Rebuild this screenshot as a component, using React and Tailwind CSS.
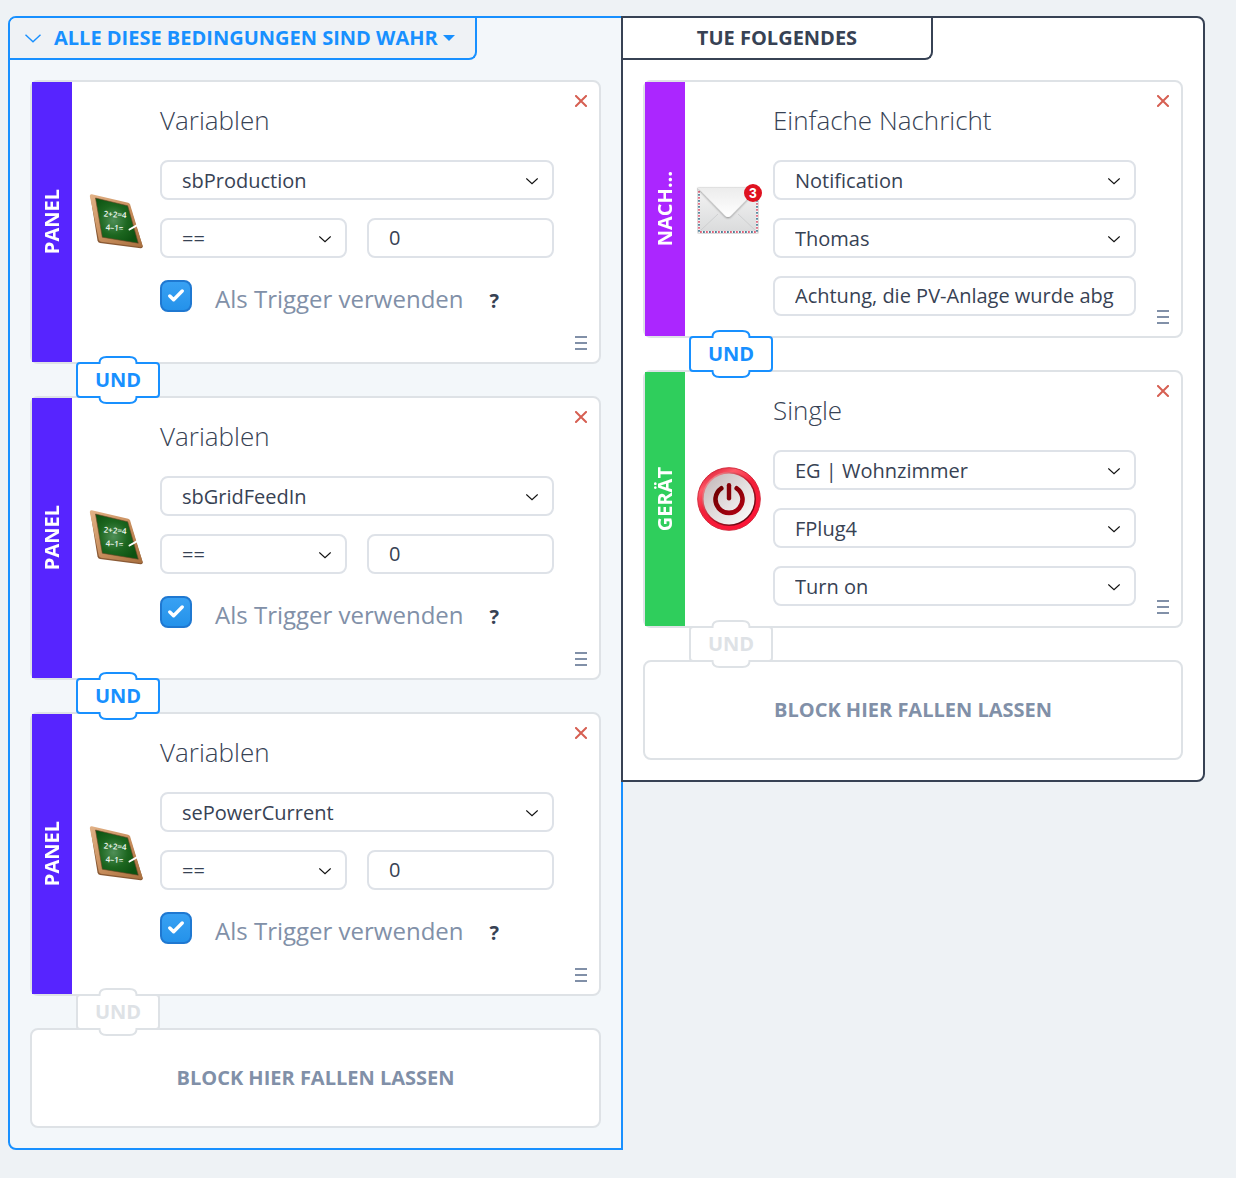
import { useId } from "react";

function ChalkboardIcon() {
  const id = useId();
  return (
    <svg viewBox="0 0 64 64" className="size-16" aria-hidden="true">
      <defs>
        <linearGradient id={id + "wood"} x1="0" y1="0" x2="1" y2="1">
          <stop offset="0" stopColor="#e2b287" />
          <stop offset="0.5" stopColor="#c98f5e" />
          <stop offset="1" stopColor="#a9703f" />
        </linearGradient>
        <radialGradient id={id + "slate"} cx="0.42" cy="0.5" r="0.6">
          <stop offset="0" stopColor="#4f8f57" />
          <stop offset="0.55" stopColor="#1c661f" />
          <stop offset="1" stopColor="#0d5211" />
        </radialGradient>
      </defs>
      <path d="M6.5 6.5 L45.5 15 L58.8 56.6 Q58.6 58.4 56.6 58.2 L16 53 Q14 52.5 13.5 50.5Z" fill="#8a5a35" />
      <path d="M5.8 6 Q5.8 4 7.8 4.3 L44.2 12.8 Q45.7 13.3 46.1 14.6 L58.4 55.3 Q58.6 57.2 56.6 57 L17 51.7 Q15.2 51.3 14.8 49.8Z" fill={`url(#${id}wood)`} />
      <path d="M11.5 8 L43.7 15.8 L54.3 53.2 L18.3 47.2Z" fill={`url(#${id}slate)`} stroke="#6b4525" strokeWidth="0.6" />
      <g fill="#f4fbf4" fontFamily="Open Sans, sans-serif" fontWeight="600" fontSize="8">
        <text x="19.5" y="26.5" transform="rotate(4 19.5 26.5)">2+2=4</text>
        <text x="21.5" y="40" transform="rotate(4 21.5 40)">4–1=</text>
      </g>
      <path d="M45.5 39.5 L52.8 35.3" stroke="#fff" strokeWidth="2" strokeLinecap="round" />
    </svg>
  );
}

function MailIcon() {
  const id = useId();
  return (
    <svg viewBox="0 0 64 64" className="size-16 overflow-visible" aria-hidden="true">
      <defs>
        <linearGradient id={id + "paper"} x1="0" y1="0" x2="0" y2="1">
          <stop offset="0" stopColor="#f4f4f4" />
          <stop offset="1" stopColor="#d9dadb" />
        </linearGradient>
        <linearGradient id={id + "flap"} x1="0" y1="0" x2="0" y2="1">
          <stop offset="0" stopColor="#ececec" />
          <stop offset="1" stopColor="#ffffff" />
        </linearGradient>
        <filter id={id + "shade"} x="-10%" y="-10%" width="120%" height="130%">
          <feDropShadow dx="0" dy="1" stdDeviation="0.8" floodColor="#000" floodOpacity="0.4" />
        </filter>
      </defs>
      <rect x="0.5" y="10.5" width="61" height="46" rx="1" fill={`url(#${id}paper)`} stroke="#dcdcdc" />
      <g fill="none" strokeWidth="1.8">
        <path d="M2 13 V55 M60 13 V55 M2 55 H60" stroke="#f6f6f6" />
        <path d="M2 14 V55 M60 14 V55 M3 55 H60" stroke="#e0637b" strokeDasharray="1.8 4.2" />
        <path d="M2 17 V55 M60 17 V55 M6 55 H60" stroke="#4d8199" strokeDasharray="1.8 4.2" />
      </g>
      <path d="M4 53 L21 37 M58 53 L41 37" stroke="#c9cacb" strokeWidth="0.8" />
      <path d="M0.5 10.5 H61.5 L34 38.5 Q31 41.5 28 38.5Z" fill={`url(#${id}flap)`} filter={`url(#${id}shade)`} />
      <circle cx="56" cy="16" r="9" fill="#df1220" />
      <text x="56" y="21" textAnchor="middle" fill="#fff" fontFamily="Liberation Sans, sans-serif" fontWeight="700" fontSize="14">3</text>
    </svg>
  );
}

function PowerIcon() {
  const id = useId();
  return (
    <svg viewBox="0 0 64 64" className="size-16" aria-hidden="true">
      <defs>
        <linearGradient id={id + "ring"} x1="0.2" y1="0" x2="0.8" y2="1">
          <stop offset="0" stopColor="#d81730" />
          <stop offset="0.2" stopColor="#ff5a68" />
          <stop offset="0.45" stopColor="#f3203a" />
          <stop offset="1" stopColor="#ff1236" />
        </linearGradient>
        <linearGradient id={id + "rim"} x1="0" y1="0" x2="1" y2="1">
          <stop offset="0" stopColor="#ffb3b3" />
          <stop offset="0.5" stopColor="#c2182b" />
          <stop offset="1" stopColor="#3d0007" />
        </linearGradient>
        <linearGradient id={id + "face"} x1="0" y1="0" x2="1" y2="1">
          <stop offset="0" stopColor="#c0b4b5" />
          <stop offset="0.5" stopColor="#e2dddd" />
          <stop offset="1" stopColor="#ffffff" />
        </linearGradient>
        <linearGradient id={id + "mark"} x1="0" y1="0" x2="1" y2="1">
          <stop offset="0" stopColor="#6d0000" />
          <stop offset="1" stopColor="#b00012" />
        </linearGradient>
      </defs>
      <circle cx="32" cy="32" r="31.3" fill={`url(#${id}ring)`} stroke="#d32a3c" />
      <circle cx="32" cy="32" r="27" fill={`url(#${id}rim)`} />
      <circle cx="32" cy="32" r="25.5" fill={`url(#${id}face)`} />
      <path d="M24.3 21.3 A13.5 13.5 0 1 0 39.7 21.3" fill="none" stroke={`url(#${id}mark)`} strokeWidth="4.6" strokeLinecap="round" />
      <rect x="29.8" y="16" width="4.4" height="17.5" rx="2.2" fill="#870008" />
    </svg>
  );
}

function Connector({ active }) {
  return (
    <div className={`relative z-10 ml-[46px] flex h-8 w-[84px] items-center ${active ? "text-[#1890ff]" : "text-[#dee2e6]"}`}>
      <div className="-my-2 grid w-full place-items-center">
        <svg width="84" height="48" viewBox="0 0 84 48" className="col-start-1 row-start-1" aria-hidden="true">
          <path
            d="M4 7 H23.5 C23.5 3 26.5 1 30.5 1 H53.5 C57.5 1 60.5 3 60.5 7 H80 Q83 7 83 10 V38 Q83 41 80 41 H60.5 C60.5 45 57.5 47 53.5 47 H30.5 C26.5 47 23.5 45 23.5 41 H4 Q1 41 1 38 V10 Q1 7 4 7Z"
            fill="#fff"
            stroke="currentColor"
            strokeWidth="2"
          />
        </svg>
        <span className="col-start-1 row-start-1 text-xl leading-7 font-bold">UND</span>
      </div>
    </div>
  );
}

function SelectField({ label, value }) {
  return (
    <div className="relative">
      <select
        aria-label={label}
        defaultValue={value}
        className="block h-10 w-full appearance-none rounded-lg border-2 border-[#dee2e8] bg-white pt-0.5 pr-10 pl-5 text-xl leading-7"
      >
        <option>{value}</option>
      </select>
      <svg viewBox="0 0 12 7" className="pointer-events-none absolute top-[18px] right-4 h-[7px] w-3" fill="none" stroke="#111" strokeWidth="1.2" aria-hidden="true">
        <path d="M0.3 0.5 L6 5.8 L11.7 0.5" />
      </svg>
    </div>
  );
}

function TextField({ label, value }) {
  return (
    <input
      type="text"
      aria-label={label}
      defaultValue={value}
      className="block h-10 w-full min-w-0 rounded-lg border-2 border-[#dee2e8] bg-white px-5 pb-0.5 text-xl leading-7"
    />
  );
}

function BlockCard({ tag, stripClass, icon, title, children }) {
  return (
    <article className="flex rounded-lg border-2 border-[#dee2e6] bg-white">
      <div className={`flex w-10 shrink-0 items-center justify-center text-white ${stripClass}`}>
        <span className="rotate-180 text-xl leading-7 font-bold [writing-mode:vertical-rl]">{tag}</span>
      </div>
      <div className="flex w-[88px] shrink-0 items-center justify-center">{icon}</div>
      <div className="min-w-0 flex-1 py-5">
        <h2 className="mb-[22px] text-[26px] leading-9 font-light">{title}</h2>
        <div className="flex flex-col gap-[18px]">{children}</div>
      </div>
      <div className="flex w-[45px] shrink-0 flex-col items-end justify-between">
        <button type="button" aria-label="Block entfernen" className="flex h-[38px] w-9 items-center justify-center">
          <svg viewBox="0 0 12 12" className="size-3" stroke="#d65f52" strokeWidth="2" aria-hidden="true">
            <path d="M0.3 0.3 L11.7 11.7 M11.7 0.3 L0.3 11.7" />
          </svg>
        </button>
        <button type="button" aria-label="Block verschieben" className="flex h-[38px] w-9 items-center justify-center">
          <svg viewBox="0 0 12 14" className="h-3.5 w-3" stroke="#8190a8" strokeWidth="2" aria-hidden="true">
            <path d="M0 1 H12 M0 7 H12 M0 13 H12" />
          </svg>
        </button>
      </div>
    </article>
  );
}

function VariableCard({ name }) {
  const id = useId();
  return (
    <BlockCard tag="PANEL" stripClass="bg-[#5724ff]" icon={<ChalkboardIcon />} title="Variablen">
      <SelectField label="Variable" value={name} />
      <div className="grid grid-cols-2 gap-5">
        <SelectField label="Vergleich" value="==" />
        <TextField label="Wert" value="0" />
      </div>
      <div className="mt-1 flex h-[62px] items-start">
        <span className="grid size-8 shrink-0 place-items-center">
          <input
            id={id}
            type="checkbox"
            defaultChecked
            className="col-start-1 row-start-1 size-8 appearance-none rounded-lg border-2 border-[#1f78d1] bg-linear-to-b from-[#38a1f3] to-[#2492ea]"
          />
          <svg viewBox="0 0 16 13" className="pointer-events-none col-start-1 row-start-1 mb-0.5 h-[13px] w-4" fill="none" stroke="#fff" strokeWidth="3.4" strokeLinecap="round" strokeLinejoin="round" aria-hidden="true">
            <path d="M1.8 7 L5.6 10.8 L14.2 2" />
          </svg>
        </span>
        <label htmlFor={id} className="ml-[23px] text-2xl leading-[38px] whitespace-nowrap text-[#8190a8]">
          Als Trigger verwenden
        </label>
        <button type="button" aria-label="Hilfe" className="ml-[26px] text-xl leading-[42px] font-bold">?</button>
      </div>
    </BlockCard>
  );
}

function DropZone() {
  return (
    <div className="flex h-[100px] items-center justify-center rounded-lg border-2 border-[#dee2e6] bg-white text-xl leading-7 font-bold text-[#8190a8]">
      BLOCK HIER FALLEN LASSEN
    </div>
  );
}

export default function App() {
  return (
    <main className="grid min-h-screen grid-cols-[613fr_584fr] items-start bg-[#eef2f5] pt-4 pr-[31px] pb-7 pl-2 font-['Open_Sans',sans-serif] text-[#374254]">
      <section className="-mr-0.5 rounded-l-lg border-2 border-[#1890ff] bg-[#f3f7fa]">
        <header className="flex h-[42px] w-fit items-center rounded-tl-md rounded-br-lg border-r-2 border-b-2 border-[#1890ff] bg-[#eff2f5] pr-5 pl-[15px] text-[#1890ff]">
          <button type="button" aria-label="Einklappen" className="mr-[13px]">
            <svg viewBox="0 0 16 9" className="h-[9px] w-4" fill="none" stroke="currentColor" strokeWidth="1.4" aria-hidden="true">
              <path d="M0.5 0.8 L8 7.8 L15.5 0.8" />
            </svg>
          </button>
          <button type="button" className="flex items-center gap-[5px] text-xl leading-7 font-bold whitespace-nowrap">
            ALLE DIESE BEDINGUNGEN SIND WAHR
            <svg viewBox="0 0 12 6" className="h-1.5 w-3" fill="currentColor" aria-hidden="true">
              <path d="M0 0 H12 L6 6Z" />
            </svg>
          </button>
        </header>
        <div className="p-5">
          <VariableCard name="sbProduction" />
          <Connector active />
          <VariableCard name="sbGridFeedIn" />
          <Connector active />
          <VariableCard name="sePowerCurrent" />
          <Connector />
          <DropZone />
        </div>
      </section>

      <section className="relative rounded-r-lg border-2 border-[#374254] bg-white">
        <header className="flex h-[42px] w-[310px] items-center justify-center rounded-br-lg border-r-2 border-b-2 border-[#374254] text-xl leading-7 font-bold">
          TUE FOLGENDES
        </header>
        <div className="p-5">
          <BlockCard tag="NACH…" stripClass="bg-[#ab26ff]" icon={<MailIcon />} title="Einfache Nachricht">
            <SelectField label="Nachrichtentyp" value="Notification" />
            <SelectField label="Empfänger" value="Thomas" />
            <TextField label="Nachricht" value="Achtung, die PV-Anlage wurde abgeschaltet" />
          </BlockCard>
          <Connector active />
          <BlockCard tag="GERÄT" stripClass="bg-[#2fce5c]" icon={<PowerIcon />} title="Single">
            <SelectField label="Raum" value="EG | Wohnzimmer" />
            <SelectField label="Gerät" value="FPlug4" />
            <SelectField label="Aktion" value="Turn on" />
          </BlockCard>
          <Connector />
          <DropZone />
        </div>
      </section>
    </main>
  );
}
